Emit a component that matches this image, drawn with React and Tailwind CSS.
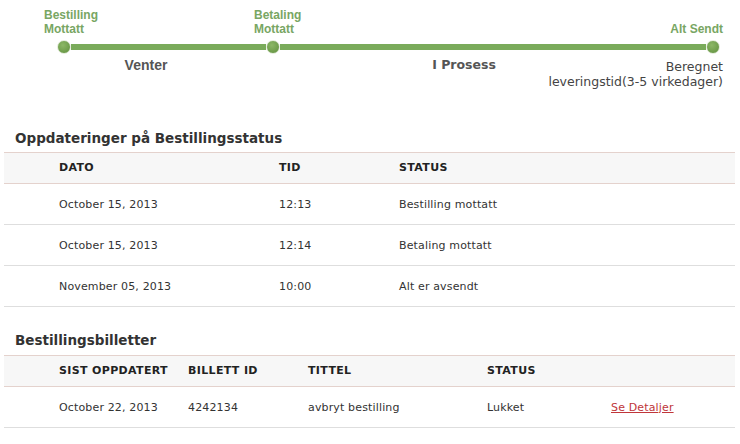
import React from 'react';

const updates = [
  { date: 'October 15, 2013', time: '12:13', status: 'Bestilling mottatt' },
  { date: 'October 15, 2013', time: '12:14', status: 'Betaling mottatt' },
  { date: 'November 05, 2013', time: '10:00', status: 'Alt er avsendt' },
];

const tickets = [
  { updated: 'October 22, 2013', id: '4242134', title: 'avbryt bestilling', status: 'Lukket' },
];

const Dot = () => (
  <div className="w-[14px] h-[14px] shrink-0 rounded-full border border-[#e4ecdc] bg-[radial-gradient(circle_at_40%_35%,#8cb766,#5f8f3d)]" />
);

const App = () => {
  return (
    <div className="w-[740px] min-h-[444px] bg-white text-[#333] font-['DejaVu_Sans',Verdana,sans-serif]">
      {/* progress tracker */}
      <section className="pt-[8px]">
        <div className="flex items-end pl-[44px] pr-[17px] font-['Liberation_Sans',Arial,sans-serif] font-bold text-[12px] leading-[14px] text-[#78a663]">
          <div className="w-[210px]">Bestilling<br />Mottatt</div>
          <div className="flex-1">Betaling<br />Mottatt</div>
          <div className="text-right">Alt Sendt</div>
        </div>
        <div className="mt-[4px] ml-[57px] w-[663px] flex items-center">
          <Dot />
          <div className="w-[195px] h-[6px] bg-[#7aab5b]" />
          <Dot />
          <div className="flex-1 h-[6px] bg-[#7aab5b]" />
          <Dot />
        </div>
        <div className="mt-[3px] flex items-start pr-[17px] h-[32px]">
          <div className="w-[292px] text-center font-['Liberation_Sans',Arial,sans-serif] font-bold text-[14px] leading-[16px] text-[#555]">
            Venter
          </div>
          <div className="ml-[92px] w-[160px] text-center font-bold text-[12.5px] leading-[16px] text-[#555]">
            I Prosess
          </div>
          <div className="flex-1 mt-[2px] text-right text-[12.5px] leading-[15px] text-[#444] whitespace-nowrap">
            Beregnet<br />leveringstid(3-5 virkedager)
          </div>
        </div>
      </section>

      {/* status updates */}
      <h2 className="mt-[39px] pl-[15px] font-bold text-[13.5px] leading-[20px] text-[#333]">
        Oppdateringer på Bestillingsstatus
      </h2>
      <div className="mt-[4px] mx-[4px] w-[731px] text-[11px] tracking-[0.15px]">
        <div className="grid grid-cols-[55px_220px_120px_1fr] items-center h-[32px] pt-[1px] bg-[#f7f7f7] border-y border-[#e4d2cd] font-bold tracking-[0.35px] text-[#222]">
          <div />
          <div>DATO</div>
          <div>TID</div>
          <div>STATUS</div>
        </div>
        {updates.map((u, i) => (
          <div
            key={i}
            className="grid grid-cols-[55px_220px_120px_1fr] items-center h-[41px] pt-[2px] border-b border-[#dedede]"
          >
            <div />
            <div>{u.date}</div>
            <div>{u.time}</div>
            <div>{u.status}</div>
          </div>
        ))}
      </div>

      {/* tickets */}
      <h2 className="mt-[23px] pl-[15px] font-bold text-[13.5px] leading-[20px] text-[#333]">
        Bestillingsbilletter
      </h2>
      <div className="mt-[5px] mx-[4px] w-[731px] text-[11px] tracking-[0.15px]">
        <div className="grid grid-cols-[55px_129px_120px_179px_124px_1fr] items-center h-[32px] pt-[1px] bg-[#f7f7f7] border-y border-[#e4d2cd] font-bold tracking-[0.35px] text-[#222]">
          <div />
          <div>SIST OPPDATERT</div>
          <div>BILLETT ID</div>
          <div>TITTEL</div>
          <div>STATUS</div>
          <div />
        </div>
        {tickets.map((t, i) => (
          <div
            key={i}
            className="grid grid-cols-[55px_129px_120px_179px_124px_1fr] items-center h-[41px] pt-[2px] border-b border-[#dedede]"
          >
            <div />
            <div>{t.updated}</div>
            <div>{t.id}</div>
            <div>{t.title}</div>
            <div>{t.status}</div>
            <div>
              <a href="#" className="text-[#c0363a] underline">Se Detaljer</a>
            </div>
          </div>
        ))}
      </div>
    </div>
  );
};

export default App;
